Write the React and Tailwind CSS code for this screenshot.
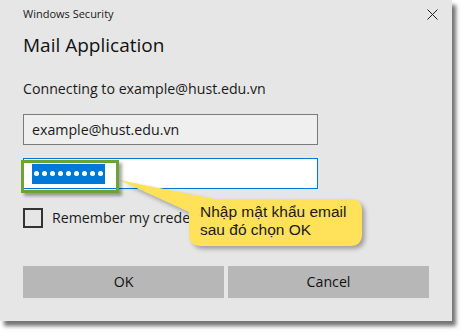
import { useState } from 'react';

const font = { fontFamily: '"Open Sans", "Noto Sans", sans-serif' };

const PasswordDots = ({ count }) => (
  <span className="flex h-[20px] items-center gap-[3px] bg-[#0078d7] px-[2px]">
    {Array.from({ length: count }).map((_, i) => (
      <span key={i} className="block h-[5px] w-[5px] rounded-full bg-white" />
    ))}
  </span>
);

const Callout = () => (
  <div className="pointer-events-none absolute left-0 top-0 h-[321px] w-[452px]">
    <svg
      width="452"
      height="321"
      className="absolute left-0 top-0 drop-shadow-[3px_3px_2px_rgba(0,0,0,0.3)]"
    >
      <path
        d="M119 180 L214 199 L350 199 Q362 199 362 211 L362 234 Q362 246 350 246 L201 246 Q189 246 189 234 L189 212 Z"
        fill="#ffe15a"
      />
    </svg>
    <div
      className="absolute left-[200px] top-[203px] text-[15.5px] leading-[18px] text-[#1a1a1a]"
      style={{ fontFamily: '"Liberation Sans", Arial, sans-serif' }}
    >
      <div>Nhập mật khẩu email</div>
      <div>sau đó chọn OK</div>
    </div>
    <div className="absolute left-[21px] top-[160px] h-[33px] w-[98px] border-[3px] border-[#6ca335] shadow-[3px_3px_3px_rgba(0,0,0,0.35)]" />
  </div>
);

export default function App() {
  const [remember, setRemember] = useState(false);

  return (
    <div className="min-h-screen bg-white" style={font}>
      <div className="relative h-[321px] w-[452px] bg-[#e6e6e6] shadow-[4px_5px_4px_rgba(0,0,0,0.55)]">
        <div className="flex h-[28px] items-center justify-between pl-[23px] pr-[14px]">
          <span className="text-[11px] text-[#1a1a1a]">Windows Security</span>
          <svg width="11" height="11" viewBox="0 0 11 11">
            <path d="M0.5 0.5 L10.5 10.5 M10.5 0.5 L0.5 10.5" stroke="#222" strokeWidth="1" />
          </svg>
        </div>

        <div className="px-[23px]">
          <h1 className="mt-[3px] h-[28px] text-[19px] leading-[28px] text-[#111]">Mail Application</h1>

          <p className="mt-[20px] h-[20px] text-[14.2px] leading-[20px] text-[#1a1a1a]">
            Connecting to example@hust.edu.vn
          </p>

          <div className="mt-[15px] flex h-[31px] w-[295px] items-center border border-[#7a7a7a] bg-[#efefef] px-[8px] text-[14.2px] text-[#1a1a1a]">
            example@hust.edu.vn
          </div>

          <div className="mt-[13px] flex h-[31px] w-[295px] items-center border border-[#0078d7] bg-white px-[8px]">
            <PasswordDots count={9} />
          </div>

          <label className="mt-[19px] flex h-[20px] items-center gap-[9px]">
            <button
              type="button"
              onClick={() => setRemember(!remember)}
              className="h-[20px] w-[20px] shrink-0 border-2 border-[#333] bg-transparent"
            />
            <span className="w-[137px] overflow-hidden whitespace-nowrap text-[14.2px] text-[#1a1a1a]">
              Remember my credentials
            </span>
          </label>

          <div className="mt-[38px] flex w-[406px] gap-[4px]">
            <button className="h-[32px] flex-1 bg-[#b7b7b7] text-[14.2px] text-[#111]">OK</button>
            <button className="h-[32px] flex-1 bg-[#b7b7b7] text-[14.2px] text-[#111]">Cancel</button>
          </div>
        </div>

        <Callout />
      </div>
    </div>
  );
}
